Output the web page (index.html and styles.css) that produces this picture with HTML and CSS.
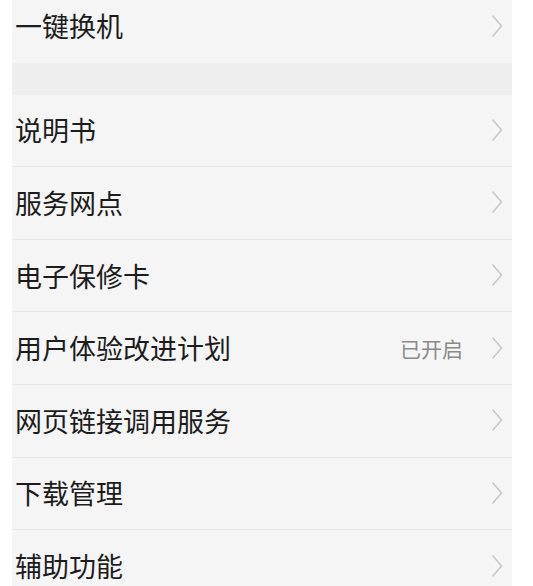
FILE: index.html
```html
<!DOCTYPE html>
<html lang="zh-CN">
 <head>
  <meta charset="UTF-8">
  <link rel="stylesheet" href="styles.css">
  <title>设置</title>
 </head>
 <body>
  <div class="panel">
   <div class="group">
    <div class="row"><span class="label">一键换机</span><svg class="arrow" viewBox="0 0 12 24"><polyline points="1.5,1.5 10.5,12 1.5,22.5"/></svg></div>
   </div>
   <div class="gap"></div>
   <div class="group">
    <div class="row"><span class="label">说明书</span><svg class="arrow" viewBox="0 0 12 24"><polyline points="1.5,1.5 10.5,12 1.5,22.5"/></svg></div>
    <div class="row"><span class="label">服务网点</span><svg class="arrow" viewBox="0 0 12 24"><polyline points="1.5,1.5 10.5,12 1.5,22.5"/></svg></div>
    <div class="row"><span class="label">电子保修卡</span><svg class="arrow" viewBox="0 0 12 24"><polyline points="1.5,1.5 10.5,12 1.5,22.5"/></svg></div>
    <div class="row"><span class="label">用户体验改进计划</span><span class="value">已开启</span><svg class="arrow" viewBox="0 0 12 24"><polyline points="1.5,1.5 10.5,12 1.5,22.5"/></svg></div>
    <div class="row"><span class="label">网页链接调用服务</span><svg class="arrow" viewBox="0 0 12 24"><polyline points="1.5,1.5 10.5,12 1.5,22.5"/></svg></div>
    <div class="row"><span class="label">下载管理</span><svg class="arrow" viewBox="0 0 12 24"><polyline points="1.5,1.5 10.5,12 1.5,22.5"/></svg></div>
    <div class="row"><span class="label">辅助功能</span><svg class="arrow" viewBox="0 0 12 24"><polyline points="1.5,1.5 10.5,12 1.5,22.5"/></svg></div>
   </div>
  </div>
 </body>
</html>
```
FILE: styles.css
```css
*{margin:0;padding:0;box-sizing:border-box}
body{
	background:#fff;
	font-family:"Noto Sans CJK SC","Noto Sans",sans-serif;
	overflow:hidden;
}
.panel{
	width:500px;
	margin:-10px 0 0 12px;   /*页面已向上滚动*/
	background:#f5f5f5;
}
.gap{
	height:32px;
	background:#eeeeee;
}
.row{
	display:flex;
	align-items:center;
	height:72.6px;
	padding:0 9px 1px 3px;
	border-bottom:1px solid #e6e6e6;
}
.group .row:last-child{border-bottom:none}
.label{
	flex:1;
	font-size:27px;
	color:#1c1c1c;
}
.value{
	font-size:21px;
	color:#8a8a8a;
	margin-right:28px;
}
.arrow{
	width:12px;
	height:24px;
	fill:none;
	stroke:#c8c8c8;
	stroke-width:1.6;
}
```
